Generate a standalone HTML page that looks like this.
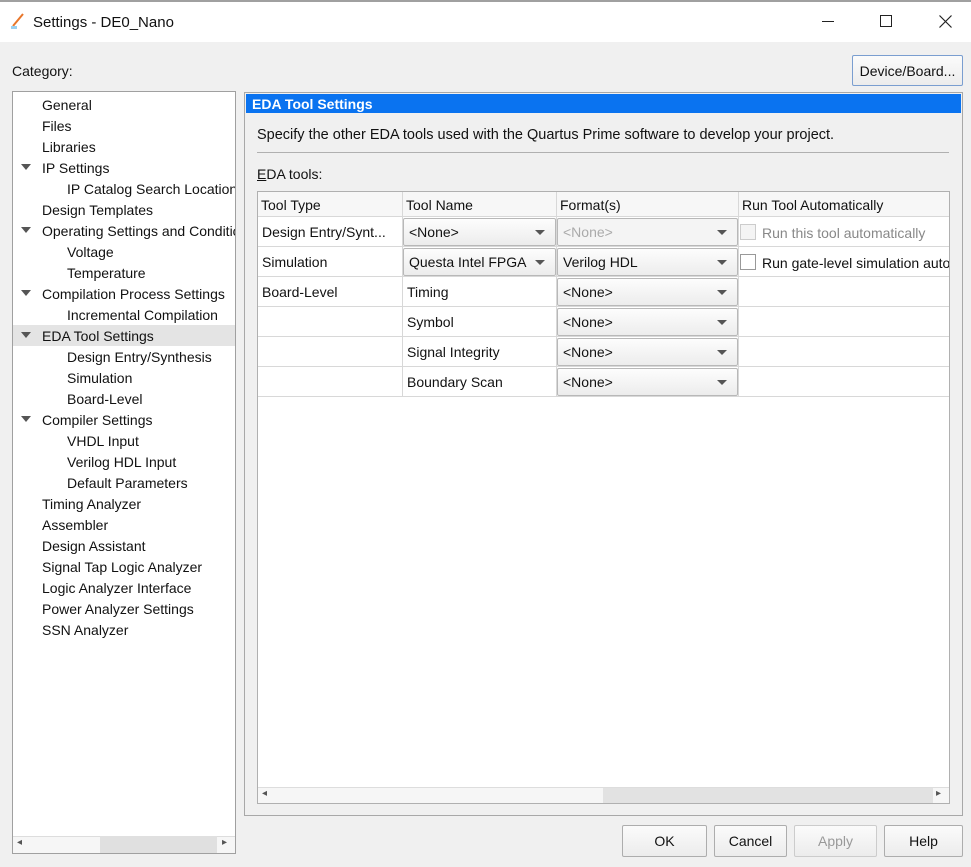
<!DOCTYPE html>
<html><head><style>
*{box-sizing:border-box;margin:0;padding:0}
body{width:971px;height:867px;background:#f0f0f0;font-family:"Liberation Sans",sans-serif;font-size:14px;color:#111;position:relative;overflow:hidden}
.a{position:absolute;white-space:nowrap}
.btn{position:absolute;border:1px solid #adadad;background:linear-gradient(#fbfbfb,#ececec);border-radius:2px;text-align:center;font-size:14px}
.tri{position:absolute;width:0;height:0;border-left:5px solid transparent;border-right:5px solid transparent;border-top:6px solid #555}
.cell{position:absolute;border-right:1px solid #d8d8d8;border-bottom:1px solid #d8d8d8;padding-left:4px;line-height:31px;overflow:hidden}
.dd{position:absolute;border:1px solid #b8b8b8;background:linear-gradient(#fdfdfd,#ececec);border-radius:2px;padding-left:5px;line-height:27px}
.dd:after{content:"";position:absolute;right:10px;top:11px;border-left:5px solid transparent;border-right:5px solid transparent;border-top:5px solid #555}
.cb{position:absolute;width:16px;height:16px;border:1px solid #999;background:#fff}
</style></head><body>
<div class="a" style="left:0;top:0;width:971px;height:2px;background:#a0a0a0"></div>
<div class="a" style="left:0;top:2px;width:971px;height:40px;background:#fff"></div>
<svg class="a" style="left:10px;top:12px" width="16" height="18"><line x1="3" y1="14" x2="13" y2="2" stroke="#e8762a" stroke-width="2"/><rect x="1" y="14" width="6" height="3" fill="#9ad0f0"/></svg>
<div class="a" style="left:33px;top:14px;font-size:15px">Settings - DE0_Nano</div>
<div class="a" style="left:822px;top:21px;width:12px;height:1px;background:#222"></div>
<div class="a" style="left:880px;top:15px;width:12px;height:12px;border:1px solid #222"></div>
<svg class="a" style="left:939px;top:15px" width="13" height="13"><path d="M0.5 0.5L12.5 12.5M12.5 0.5L0.5 12.5" stroke="#222" stroke-width="1.2"/></svg>
<div class="a" style="left:12px;top:63px">Category:</div>
<div class="btn" style="left:852px;top:55px;width:111px;height:31px;line-height:30px;border-color:#7a9ed0">Device/Board...</div>
<!-- tree -->
<div class="a" style="left:12px;top:91px;width:224px;height:763px;background:#fff;border:1px solid #a0a0a0"></div>
<div class="a" style="left:13px;top:325px;width:222px;height:21px;background:#e4e4e4"></div>
<div class="a" style="left:13px;top:95px;width:222px;height:740px;overflow:hidden;line-height:21px">
<div style="padding-left:29px">General</div>
<div style="padding-left:29px">Files</div>
<div style="padding-left:29px">Libraries</div>
<div style="padding-left:29px">IP Settings</div>
<div style="padding-left:54px;white-space:nowrap">IP Catalog Search Locations</div>
<div style="padding-left:29px">Design Templates</div>
<div style="padding-left:29px;white-space:nowrap">Operating Settings and Conditions</div>
<div style="padding-left:54px">Voltage</div>
<div style="padding-left:54px">Temperature</div>
<div style="padding-left:29px;white-space:nowrap">Compilation Process Settings</div>
<div style="padding-left:54px;white-space:nowrap">Incremental Compilation</div>
<div style="padding-left:29px">EDA Tool Settings</div>
<div style="padding-left:54px">Design Entry/Synthesis</div>
<div style="padding-left:54px">Simulation</div>
<div style="padding-left:54px">Board-Level</div>
<div style="padding-left:29px">Compiler Settings</div>
<div style="padding-left:54px">VHDL Input</div>
<div style="padding-left:54px">Verilog HDL Input</div>
<div style="padding-left:54px">Default Parameters</div>
<div style="padding-left:29px">Timing Analyzer</div>
<div style="padding-left:29px">Assembler</div>
<div style="padding-left:29px">Design Assistant</div>
<div style="padding-left:29px">Signal Tap Logic Analyzer</div>
<div style="padding-left:29px">Logic Analyzer Interface</div>
<div style="padding-left:29px">Power Analyzer Settings</div>
<div style="padding-left:29px">SSN Analyzer</div>
</div>
<div class="tri" style="left:21px;top:164px"></div>
<div class="tri" style="left:21px;top:227px"></div>
<div class="tri" style="left:21px;top:290px"></div>
<div class="tri" style="left:21px;top:332px"></div>
<div class="tri" style="left:21px;top:416px"></div>
<div class="a" style="left:13px;top:836px;width:222px;height:17px;background:#f6f6f6;border-top:1px solid #ddd"></div>
<div class="a" style="left:100px;top:836px;width:117px;height:17px;background:#e0e0e0"></div>
<div class="a" style="left:17px;top:837px;font-size:10px;color:#555">◂</div>
<div class="a" style="left:222px;top:837px;font-size:10px;color:#555">▸</div>
<!-- right panel -->
<div class="a" style="left:244px;top:92px;width:719px;height:724px;border:1px solid #a8a8a8"></div>
<div class="a" style="left:246px;top:94px;width:715px;height:19px;background:#0a73f0;color:#fff;font-weight:bold;padding-left:6px;line-height:20px">EDA Tool Settings</div>
<div class="a" style="left:257px;top:127px;font-size:14.5px">Specify the other EDA tools used with the Quartus Prime software to develop your project.</div>
<div class="a" style="left:257px;top:152px;width:692px;height:1px;background:#b0b0b0"></div>
<div class="a" style="left:257px;top:166px"><u>E</u>DA tools:</div>
<div class="a" style="left:257px;top:191px;width:693px;height:613px;background:#fff;border:1px solid #b0b0b0"></div>
<div class="a" style="left:258px;top:192px;width:691px;height:25px;background:#f7f7f7;border-bottom:1px solid #d0d0d0"></div>
<div class="cell" style="left:258px;top:192px;width:145px;height:25px;line-height:26px;padding-left:3px">Tool Type</div>
<div class="cell" style="left:403px;top:192px;width:154px;height:25px;line-height:26px;padding-left:3px">Tool Name</div>
<div class="cell" style="left:557px;top:192px;width:182px;height:25px;line-height:26px;padding-left:3px">Format(s)</div>
<div class="cell" style="left:739px;top:192px;width:210px;height:25px;line-height:26px;padding-left:3px;border-right:none">Run Tool Automatically</div>
<!-- rows -->
<div class="cell" style="left:258px;top:217px;width:145px;height:30px">Design Entry/Synt...</div>
<div class="cell" style="left:258px;top:247px;width:145px;height:30px">Simulation</div>
<div class="cell" style="left:258px;top:277px;width:145px;height:30px">Board-Level</div>
<div class="cell" style="left:258px;top:307px;width:145px;height:30px"></div>
<div class="cell" style="left:258px;top:337px;width:145px;height:30px"></div>
<div class="cell" style="left:258px;top:367px;width:145px;height:30px"></div>
<div class="cell" style="left:403px;top:217px;width:154px;height:30px"></div>
<div class="cell" style="left:403px;top:247px;width:154px;height:30px"></div>
<div class="cell" style="left:403px;top:277px;width:154px;height:30px">Timing</div>
<div class="cell" style="left:403px;top:307px;width:154px;height:30px">Symbol</div>
<div class="cell" style="left:403px;top:337px;width:154px;height:30px">Signal Integrity</div>
<div class="cell" style="left:403px;top:367px;width:154px;height:30px">Boundary Scan</div>
<div class="cell" style="left:557px;top:217px;width:182px;height:30px"></div>
<div class="cell" style="left:557px;top:247px;width:182px;height:30px"></div>
<div class="cell" style="left:557px;top:277px;width:182px;height:30px"></div>
<div class="cell" style="left:557px;top:307px;width:182px;height:30px"></div>
<div class="cell" style="left:557px;top:337px;width:182px;height:30px"></div>
<div class="cell" style="left:557px;top:367px;width:182px;height:30px"></div>
<div class="cell" style="left:739px;top:217px;width:210px;height:30px;border-right:none"></div>
<div class="cell" style="left:739px;top:247px;width:210px;height:30px;border-right:none"></div>
<div class="cell" style="left:739px;top:277px;width:210px;height:30px;border-right:none"></div>
<div class="cell" style="left:739px;top:307px;width:210px;height:30px;border-right:none"></div>
<div class="cell" style="left:739px;top:337px;width:210px;height:30px;border-right:none"></div>
<div class="cell" style="left:739px;top:367px;width:210px;height:30px;border-right:none"></div>
<div class="dd" style="left:403px;top:218px;width:153px;height:28px">&lt;None&gt;</div>
<div class="dd" style="left:403px;top:248px;width:153px;height:28px">Questa Intel FPGA</div>
<div class="dd" style="left:557px;top:218px;width:181px;height:28px;color:#aaa;background:#f4f4f4">&lt;None&gt;</div>
<div class="dd" style="left:557px;top:248px;width:181px;height:28px">Verilog HDL</div>
<div class="dd" style="left:557px;top:278px;width:181px;height:28px">&lt;None&gt;</div>
<div class="dd" style="left:557px;top:308px;width:181px;height:28px">&lt;None&gt;</div>
<div class="dd" style="left:557px;top:338px;width:181px;height:28px">&lt;None&gt;</div>
<div class="dd" style="left:557px;top:368px;width:181px;height:28px">&lt;None&gt;</div>
<div class="cb" style="left:740px;top:224px;border-color:#ccc;background:#f4f4f4"></div>
<div class="a" style="left:762px;top:225px;color:#888">Run this tool automatically</div>
<div class="cb" style="left:740px;top:254px"></div>
<div class="a" style="left:762px;top:255px;width:187px;overflow:hidden">Run gate-level simulation automatically</div>
<div class="a" style="left:258px;top:787px;width:691px;height:16px;background:#f6f6f6;border-top:1px solid #ddd"></div>
<div class="a" style="left:603px;top:788px;width:330px;height:15px;background:#e2e2e2"></div>
<div class="a" style="left:262px;top:788px;font-size:10px;color:#555">◂</div>
<div class="a" style="left:936px;top:788px;font-size:10px;color:#555">▸</div>
<!-- buttons -->
<div class="btn" style="left:622px;top:825px;width:85px;height:32px;line-height:31px">OK</div>
<div class="btn" style="left:714px;top:825px;width:73px;height:32px;line-height:31px">Cancel</div>
<div class="btn" style="left:794px;top:825px;width:83px;height:32px;line-height:31px;color:#999;border-color:#ccc">Apply</div>
<div class="btn" style="left:884px;top:825px;width:79px;height:32px;line-height:31px">Help</div>
</body></html>
